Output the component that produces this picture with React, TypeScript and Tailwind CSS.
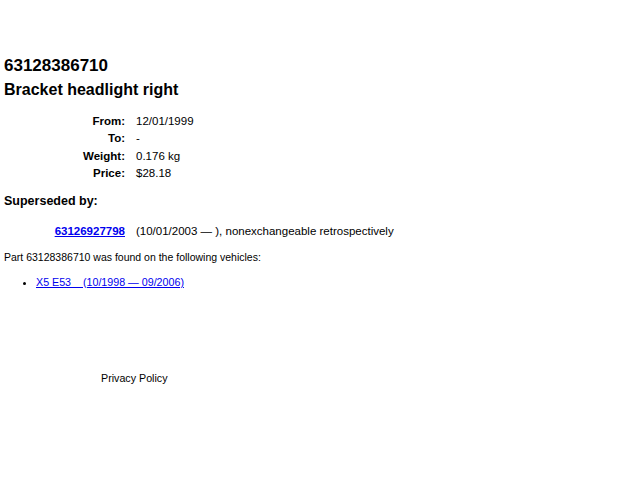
export default function App() {
  const rows = [
    ["From:", "12/01/1999"],
    ["To:", "-"],
    ["Weight:", "0.176 kg"],
    ["Price:", "$28.18"],
  ];
  return (
    <div className="w-[640px] h-[480px] bg-white text-black px-[4px]" style={{ fontFamily: '"Liberation Sans", Arial, sans-serif' }}>
      <div className="pt-[55px]">
        <div className="text-[17px] font-bold leading-[22px]">63128386710</div>
        <div className="text-[16px] font-bold leading-[22px] mt-[2px]">Bracket headlight right</div>
      </div>
      <div className="grid grid-cols-[121px_auto] gap-x-[11px] mt-[12px] text-[11.5px] leading-[17.4px]">
        {rows.map(([l, v]) => (
          <>
            <div key={l} className="text-right font-bold">{l}</div>
            <div key={l + "v"}>{v}</div>
          </>
        ))}
      </div>
      <div className="mt-[9px] text-[12.5px] font-bold leading-[18px]">Superseded by:</div>
      <div className="grid grid-cols-[121px_auto] gap-x-[11px] mt-[13px] text-[11.5px] leading-[17px]">
        <div className="text-right">
          <a href="#" className="font-bold text-[#0000ee] underline">63126927798</a>
        </div>
        <div>(10/01/2003 — ), nonexchangeable retrospectively</div>
      </div>
      <div className="mt-[10px] text-[10.5px] leading-[14px]">Part 63128386710 was found on the following vehicles:</div>
      <ul className="mt-[11px] pl-[32px] list-disc text-[10.7px] leading-[14px]">
        <li>
          <a href="#" className="text-[#0000ee] underline whitespace-pre">X5 E53    (10/1998 — 09/2006)</a>
        </li>
      </ul>
      <div className="mt-[82px] pl-[97px] text-[10.7px] leading-[14px]">Privacy Policy</div>
    </div>
  );
}
